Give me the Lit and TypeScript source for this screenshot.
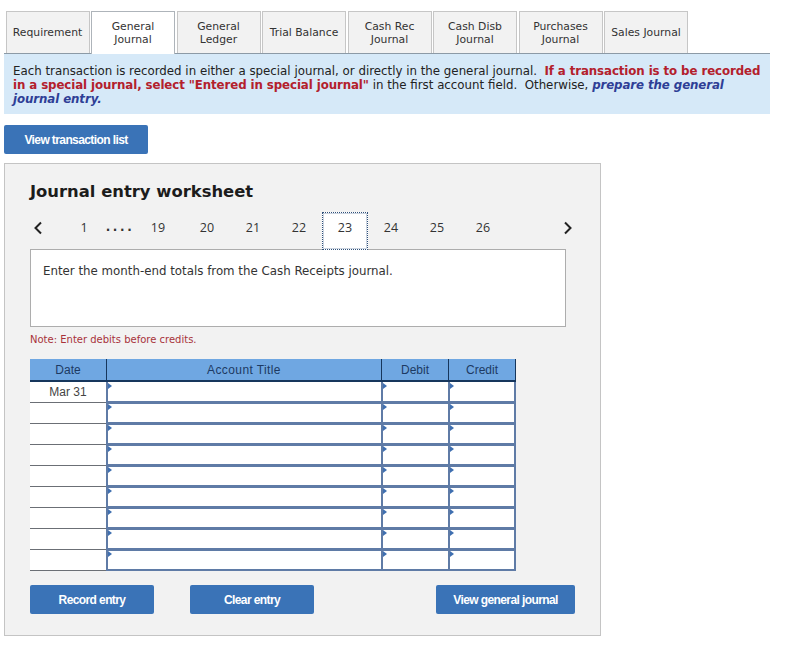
import { LitElement, html, css } from "lit";
import { customElement } from "lit/decorators.js";

const TABS = [
  ["Requirement"],
  ["General", "Journal"],
  ["General", "Ledger"],
  ["Trial Balance"],
  ["Cash Rec", "Journal"],
  ["Cash Disb", "Journal"],
  ["Purchases", "Journal"],
  ["Sales Journal"],
];
const PAGES = ["1", "....", "19", "20", "21", "22", "23", "24", "25", "26"];
const ROW_COUNT = 9;

@customElement("app-root")
export class AppRoot extends LitElement {
  static styles = css`
    :host {
      display: block;
      width: 787px;
      height: 661px;
      background: #fff;
      font-family: "DejaVu Sans", sans-serif;
      color: #222;
      overflow: hidden;
    }

    .tabs {
      display: grid;
      grid-template-columns: repeat(8, 84px);
      column-gap: 1.5px;
      width: 766px;
      height: 54px;
      box-sizing: border-box;
      margin: 0 0 0 4px;
      padding: 11px 0 0 1.5px;
      border-bottom: 1px solid #8c9aa6;
    }

    .tab {
      display: flex;
      flex-direction: column;
      align-items: center;
      justify-content: center;
      height: 42px;
      box-sizing: border-box;
      border: 1px solid #c6c6c6;
      border-bottom: none;
      background: #f2f2f2;
      font-size: 10.8px;
      line-height: 13px;
      color: #333;
    }

    .tab.active {
      height: 43px;
      background: #fff;
      border-color: #aeb4ba;
      position: relative;
    }

    .info {
      width: 766px;
      height: 60px;
      margin-left: 4px;
      box-sizing: border-box;
      padding: 10px 6px 0 9px;
      background: #d6e9f8;
      font-size: 11.82px;
      line-height: 14px;
      white-space: pre-wrap;
    }

    .info .red {
      color: #b3202c;
      font-weight: bold;
      letter-spacing: -0.1px;
    }

    .info .blue {
      color: #2e3e96;
      font-weight: bold;
      font-style: italic;
      letter-spacing: -0.1px;
    }

    .btn {
      display: flex;
      align-items: center;
      justify-content: center;
      height: 29px;
      box-sizing: border-box;
      background: #3a73b7;
      border-radius: 2px;
      color: #fff;
      font-family: "Liberation Sans", sans-serif;
      font-weight: bold;
      font-size: 12px;
      letter-spacing: -0.6px;
    }

    .view-list {
      width: 144px;
      margin: 11px 0 9px 4px;
    }

    .panel {
      width: 597px;
      height: 473px;
      margin-left: 4px;
      box-sizing: border-box;
      padding: 0 0 0 25px;
      background: #f2f2f2;
      border: 1px solid #c4c4c4;
    }

    h2 {
      margin: 0;
      padding-top: 17px;
      height: 48px;
      box-sizing: border-box;
      font-size: 16.4px;
      line-height: 22px;
      font-weight: bold;
      color: #1c1c1c;
    }

    .pager {
      display: flex;
      align-items: stretch;
      height: 38px;
      width: 546px;
      font-family: "Open Sans", sans-serif;
      font-size: 12.5px;
      color: #333;
    }

    .chev {
      display: flex;
      align-items: center;
      flex: none;
      width: 38px;
      padding-bottom: 7px;
      box-sizing: border-box;
    }

    .chev.next {
      margin-left: 50px;
      width: 20px;
      padding-left: 4px;
    }

    .chev svg {
      display: block;
      margin-left: 3px;
    }

    .page {
      display: flex;
      align-items: center;
      justify-content: center;
      flex: none;
      width: 46px;
      box-sizing: border-box;
      padding-bottom: 7px;
    }

    .page.first {
      width: 32px;
    }

    .page.dots {
      width: 40px;
      font-family: "DejaVu Sans", sans-serif;
      font-weight: bold;
      font-size: 12px;
      letter-spacing: 2.6px;
      padding-bottom: 8px;
    }

    .page.narrow {
      width: 44px;
      padding-right: 8px;
    }

    .page.active {
      position: relative;
      z-index: 1;
      background: #fff;
      border: 1px dotted #2f5079;
      box-shadow: inset 0 0 0 1px rgba(79, 109, 148, 0.3);
    }

    .prompt {
      width: 536px;
      height: 78px;
      margin-top: -1px;
      box-sizing: border-box;
      padding: 14px 12px 0;
      background: #fff;
      border: 1px solid #adadad;
      font-size: 11.82px;
      line-height: 15px;
      color: #333;
    }

    .note {
      height: 32px;
      box-sizing: border-box;
      padding-top: 7px;
      font-size: 10px;
      line-height: 12px;
      color: #a8323a;
    }

    .grid {
      display: grid;
      grid-template-columns: 76px 275px 67px 68px;
      grid-template-rows: 23px;
      grid-auto-rows: 21px;
      width: 486px;
      font-family: "Liberation Sans", sans-serif;
      font-size: 12px;
    }

    .head {
      display: flex;
      align-items: center;
      justify-content: center;
      box-sizing: border-box;
      background: #6fa7e2;
      border-bottom: 2px solid #16365c;
      border-left: 1px solid #16365c;
      color: #1d3a63;
      padding-top: 1px;
    }

    .head.date {
      border-left: none;
    }

    .head.account {
      letter-spacing: 0.4px;
    }

    .head.credit {
      border-right: 1px solid #16365c;
    }

    .date-cell {
      display: flex;
      align-items: center;
      justify-content: center;
      box-sizing: border-box;
      background: #fff;
      border-bottom: 1px solid #6b6f75;
      color: #444;
    }

    .input-cell {
      position: relative;
      box-sizing: border-box;
      background: #fff;
      border-left: 2px solid #5f7ba6;
      border-top: 1px solid #5f7ba6;
      border-bottom: 2px solid #5f7ba6;
    }

    .input-cell.first-row {
      border-top: none;
    }

    .input-cell.first-row::before {
      top: 1px;
    }

    .input-cell.last-col {
      border-right: 2px solid #5f7ba6;
    }

    .input-cell::before {
      content: "";
      position: absolute;
      left: 0;
      top: 0;
      border-left: 4px solid #3f6fb0;
      border-top: 3px solid transparent;
      border-bottom: 3px solid transparent;
    }

    .actions {
      display: flex;
      width: 545px;
      margin-top: 14px;
    }

    .actions .record,
    .actions .clear {
      width: 124px;
    }

    .actions .clear {
      margin-left: 36px;
    }

    .actions .journal {
      width: 139px;
      margin-left: 122px;
    }
  `;

  private renderRow(i: number) {
    const first = i === 0 ? "first-row" : "";
    return html`
      <div class="date-cell">${i === 0 ? "Mar 31" : ""}</div>
      <div class="input-cell ${first}"></div>
      <div class="input-cell ${first}"></div>
      <div class="input-cell last-col ${first}"></div>
    `;
  }

  private pageClass(p: string) {
    if (p === "1") return "page first";
    if (p === "....") return "page dots";
    if (p === "19") return "page narrow";
    if (p === "23") return "page active";
    return "page";
  }

  render() {
    const rows = Array.from({ length: ROW_COUNT }, (_, i) => i);
    return html`
      <div class="tabs">
        ${TABS.map(
          (lines, i) => html`<div class="tab ${i === 1 ? "active" : ""}">
            ${lines.map((l) => html`<span>${l}</span>`)}
          </div>`,
        )}
      </div>
      <div class="info">Each transaction is recorded in either a special journal, or directly in the general journal.  <span class="red">If a transaction is to be recorded</span> <span class="red">in a special journal, select "Entered in special journal"</span> in the first account field.  Otherwise, <span class="blue">prepare the general</span> <span class="blue">journal entry.</span></div>
      <div class="btn view-list">View transaction list</div>
      <div class="panel">
        <h2>Journal entry worksheet</h2>
        <div class="pager">
          <div class="chev">
            <svg width="10" height="14" viewBox="0 0 10 14">
              <path d="M8 1.5 2.5 7 8 12.5" fill="none" stroke="#222" stroke-width="2" />
            </svg>
          </div>
          ${PAGES.map((p) => html`<div class=${this.pageClass(p)}>${p}</div>`)}
          <div class="chev next">
            <svg width="10" height="14" viewBox="0 0 10 14">
              <path d="M2 1.5 7.5 7 2 12.5" fill="none" stroke="#222" stroke-width="2" />
            </svg>
          </div>
        </div>
        <div class="prompt">Enter the month-end totals from the Cash Receipts journal.</div>
        <div class="note">Note: Enter debits before credits.</div>
        <div class="grid">
          <div class="head date">Date</div>
          <div class="head account">Account Title</div>
          <div class="head">Debit</div>
          <div class="head credit">Credit</div>
          ${rows.map((i) => this.renderRow(i))}
        </div>
        <div class="actions">
          <div class="btn record">Record entry</div>
          <div class="btn clear">Clear entry</div>
          <div class="btn journal">View general journal</div>
        </div>
      </div>
    `;
  }
}
